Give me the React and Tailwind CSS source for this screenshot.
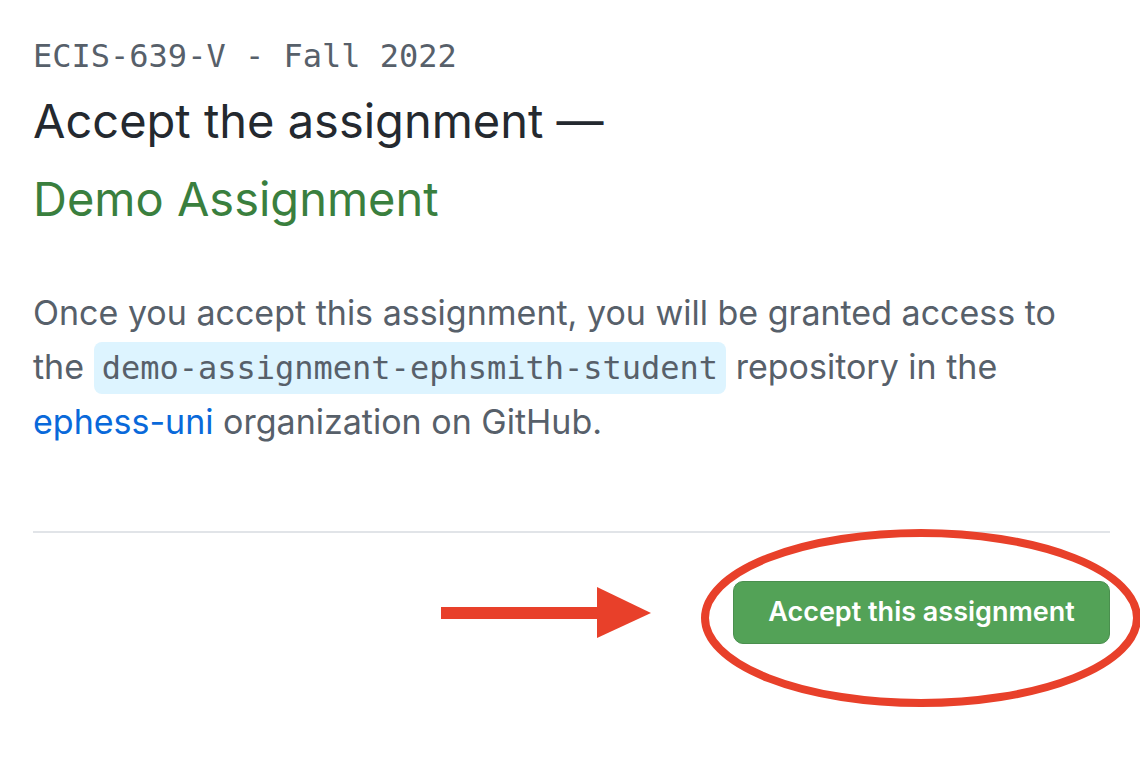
export default function App() {
  return (
    <div className="w-[1140px] h-[774px] bg-white overflow-hidden font-['Inter',sans-serif]">
      <div className="pl-[33px] pr-[30px] pt-[36px]">
        <div className="font-['DejaVu_Sans_Mono',monospace] text-[32px] leading-[40px] text-[#57606a]">
          ECIS-639-V - Fall 2022
        </div>
        <h1 className="mt-[6px] text-[47px] leading-[78px] text-[#24292f] font-normal">
          Accept the assignment —
          <br />
          <span className="text-[#3a7f3e]">Demo Assignment</span>
        </h1>
        <p className="mt-[48px] text-[34px] leading-[54px] text-[#57606a]">
          Once you accept this assignment, you will be granted access to
          <br />
          the{" "}
          <code className="font-['DejaVu_Sans_Mono',monospace] text-[32px] bg-[#ddf4ff] rounded-[8px] px-[8px] py-[7px]">
            demo-assignment-ephsmith-student
          </code>{" "}
          repository in the
          <br />
          <a className="text-[#0969da]">ephess-uni</a> organization on GitHub.
        </p>
        <div className="mt-[82px] border-t-2 border-[#e1e4e8] w-[1077px]" />
        <div className="flex justify-end items-center w-[1077px] mt-[48px] relative">
          <svg width="212" height="52" viewBox="0 0 212 52" className="mr-[80px]">
            <rect x="0" y="20" width="158" height="12" fill="#e8402a" />
            <polygon points="156,0 210,26 156,51" fill="#e8402a" />
          </svg>
          <button className="w-[377px] h-[63px] rounded-[10px] bg-[#53a257] border border-[#4a8f4e] text-white text-[27px] font-semibold">
            Accept this assignment
          </button>
          <svg width="460" height="186" viewBox="0 0 460 186" className="absolute right-[-49px] top-[-54px]">
            <ellipse cx="222" cy="91" rx="216" ry="85" fill="none" stroke="#e8402a" strokeWidth="8" />
          </svg>
        </div>
      </div>
    </div>
  );
}
